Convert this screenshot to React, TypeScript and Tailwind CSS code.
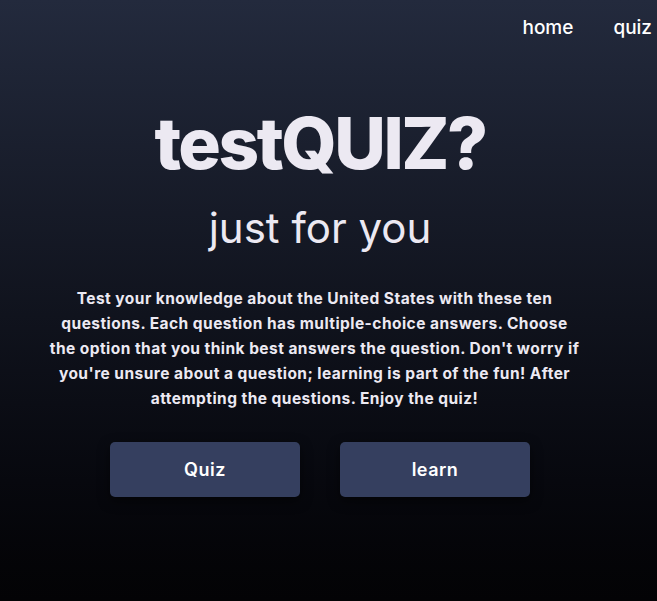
import React from "react";

const NAV_ITEMS = ["home", "quiz"];

export default function App() {
  return (
    <div
      className="min-h-screen w-full bg-gradient-to-b from-[#232a3d] to-[#030305] text-[#ece9f2] overflow-hidden"
      style={{ fontFamily: "Inter, 'Open Sans', sans-serif" }}
    >
      <nav className="flex justify-end gap-[40px] pr-[5px] pt-[15px]">
        {NAV_ITEMS.map((item) => (
          <a key={item} href="#" className="text-[19px] font-medium leading-[26px] text-white">
            {item}
          </a>
        ))}
      </nav>

      <main className="w-[640px] flex flex-col items-center">
        <h1 className="mt-[57px] text-[71px] font-extrabold leading-[90px] tracking-[-2.5px]">
          testQUIZ?
        </h1>
        <h2 className="mt-[15px] text-[42px] font-normal leading-[50px]">just for you</h2>

        <p className="mt-[33px] mr-[11px] w-[600px] text-center text-[15.5px] font-bold leading-[25px] tracking-[0.45px]">
          Test your knowledge about the United States with these ten
          <br />
          questions. Each question has multiple-choice answers. Choose
          <br />
          the option that you think best answers the question. Don't worry if
          <br />
          you're unsure about a question; learning is part of the fun! After
          <br />
          attempting the questions. Enjoy the quiz!
        </p>

        <div className="mt-[31px] flex gap-[40px]">
          <button className="w-[190px] h-[55px] rounded-[5px] bg-[#353f5f] text-[18px] font-semibold tracking-[0.5px] text-white shadow-[0_4px_12px_rgba(0,0,0,0.5)]">
            Quiz
          </button>
          <button className="w-[190px] h-[55px] rounded-[5px] bg-[#353f5f] text-[18px] font-semibold tracking-[0.5px] text-white shadow-[0_4px_12px_rgba(0,0,0,0.5)]">
            learn
          </button>
        </div>
      </main>
    </div>
  );
}
